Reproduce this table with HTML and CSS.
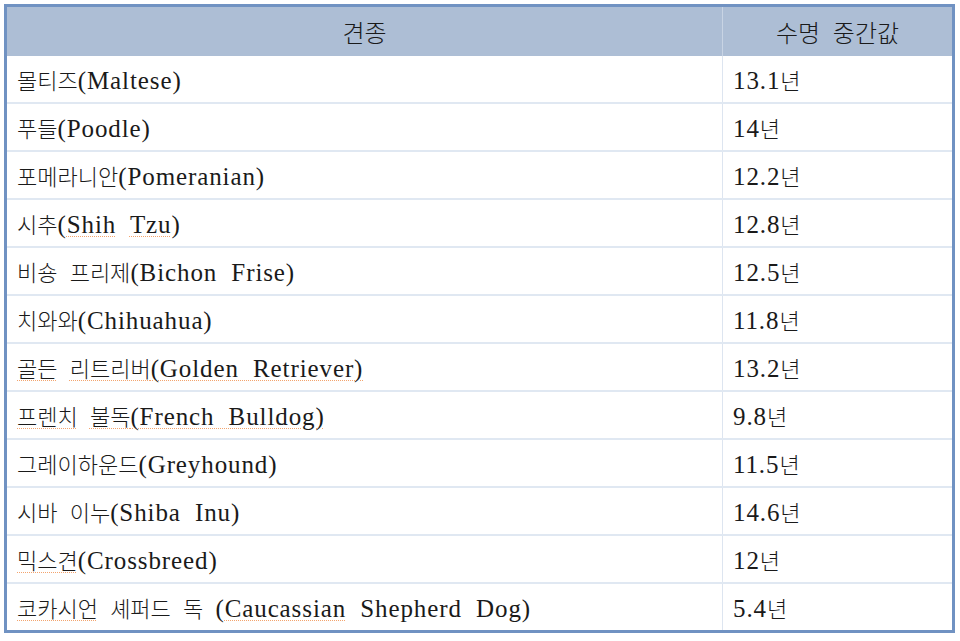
FILE: index.html
```html
<!DOCTYPE html>
<html lang="ko">
<head>
<meta charset="utf-8">
<title>견종별 수명 중간값</title>
<link rel="stylesheet" href="styles.css">
</head>
<body>
<div class="wrap">
<table class="breeds">
  <thead>
    <tr><th class="c-name">견종</th><th class="c-life">수명 중간값</th></tr>
  </thead>
  <tbody>
    <tr><td>몰티즈<span class="en">(Maltese)</span></td><td><span class="en">13.1</span>년</td></tr>
    <tr><td>푸들<span class="en">(Poodle)</span></td><td><span class="en">14</span>년</td></tr>
    <tr><td>포메라니안<span class="en">(Pomeranian)</span></td><td><span class="en">12.2</span>년</td></tr>
    <tr><td>시추<span class="en">(<span class="sp">Shih</span> <span class="sp">Tzu</span>)</span></td><td><span class="en">12.8</span>년</td></tr>
    <tr><td>비숑 프리제<span class="en">(Bichon Frise)</span></td><td><span class="en">12.5</span>년</td></tr>
    <tr><td>치와와<span class="en">(Chihuahua)</span></td><td><span class="en">11.8</span>년</td></tr>
    <tr><td><span class="sp">골든</span> <span class="sp">리트리버<span class="en">(Golden Retriever)</span></span></td><td><span class="en">13.2</span>년</td></tr>
    <tr><td><span class="sp">프렌치</span> <span class="sp">불독<span class="en">(French Bulldog)</span></span></td><td><span class="en">9.8</span>년</td></tr>
    <tr><td>그레이하운드<span class="en">(Greyhound)</span></td><td><span class="en">11.5</span>년</td></tr>
    <tr><td>시바 이누<span class="en">(Shiba Inu)</span></td><td><span class="en">14.6</span>년</td></tr>
    <tr><td><span class="sp">믹스견</span><span class="en">(Crossbreed)</span></td><td><span class="en">12</span>년</td></tr>
    <tr><td><span class="sp">코카시언</span> 셰퍼드 독 <span class="en">(<span class="sp">Caucassian</span> Shepherd Dog)</span></td><td><span class="en">5.4</span>년</td></tr>
  </tbody>
</table>
</div>
</body>
</html>
```
FILE: styles.css
```css
html, body {
  margin: 0;
  padding: 0;
  background: #ffffff;
}
.wrap {
  padding: 4px 5px 0 4px;
}
.breeds {
  width: 951px;
  border-collapse: collapse;
  border: 3px solid #7092c2;
  font-family: "Noto Sans CJK KR", "Liberation Serif", sans-serif;
  font-size: 22px;
  font-weight: 300;
  color: #1a1a1a;
  word-spacing: 6px;
}
.en {
  font-family: "Liberation Serif", "Noto Sans CJK KR", serif;
  font-size: 25px;
  font-weight: normal;
  letter-spacing: 0.9px;
  word-spacing: 7px;
}
.breeds th {
  background: #adbed5;
  font-size: 24px;
  font-weight: 300;
  height: 49px;
  padding: 0;
  text-align: center;
  border-left: 1px solid #c8d4e4;
}
.breeds th:first-child { border-left: none; }
.c-life { width: 229px; }
.breeds td {
  height: 46px;
  padding: 0 0 0 10px;
  border-top: 2px solid #e0e8f2;
  border-left: 1px solid #dde5f0;
  text-align: left;
  vertical-align: middle;
}
.breeds td:first-child { border-left: none; }
.breeds thead + tbody tr:first-child td { border-top: none; }
.sp {
  text-decoration: underline dotted #f3a46e;
  text-decoration-thickness: 1px;
  text-underline-offset: 3px;
}
```
